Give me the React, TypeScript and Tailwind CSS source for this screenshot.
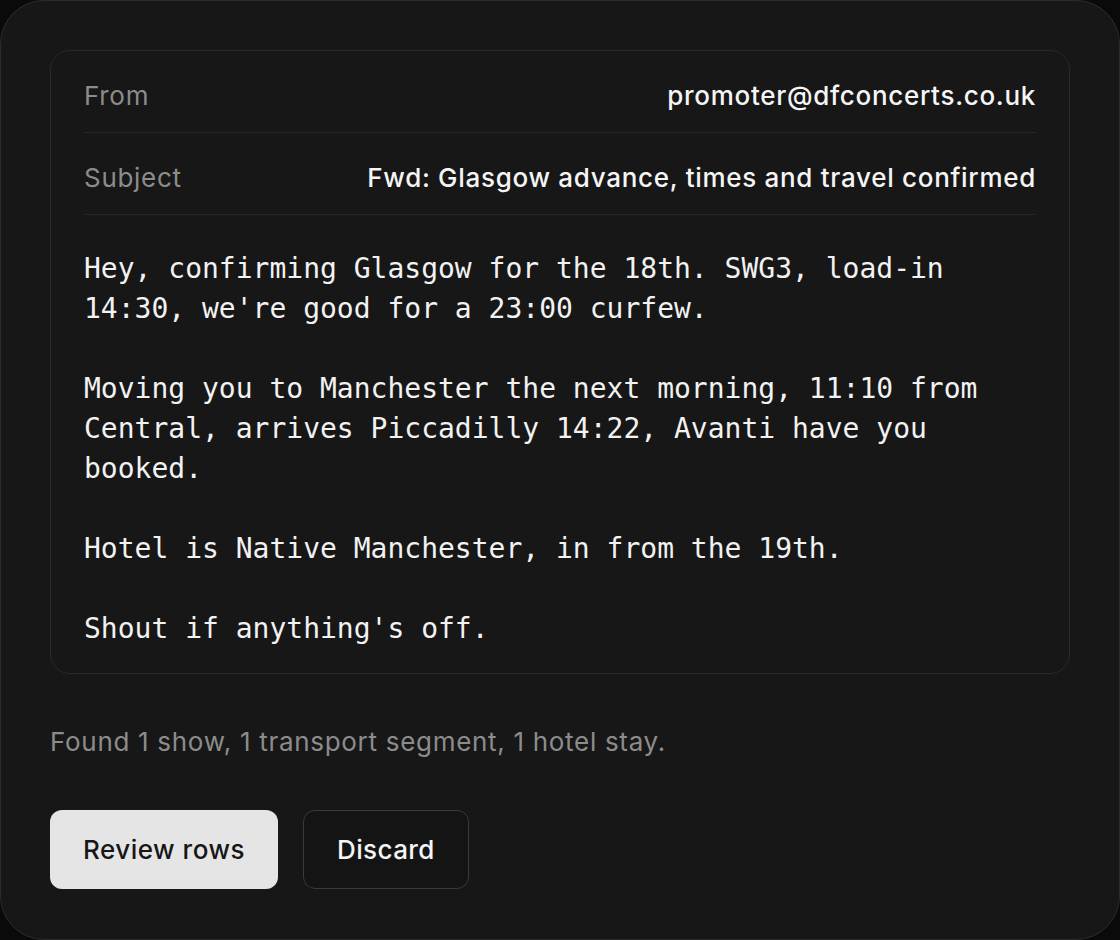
const BODY = `Hey, confirming Glasgow for the 18th. SWG3, load-in 14:30, we're good for a 23:00 curfew.

Moving you to Manchester the next morning, 11:10 from Central, arrives Piccadilly 14:22, Avanti have you booked.

Hotel is Native Manchester, in from the 19th.

Shout if anything's off.`;

const FIELDS = [
  { label: "From", value: "promoter@dfconcerts.co.uk" },
  { label: "Subject", value: "Fwd: Glasgow advance, times and travel confirmed" },
];

export default function App() {
  return (
    <div className="min-h-screen bg-[#0a0a0a] font-['Inter','Liberation_Sans',sans-serif]">
      <div className="w-[1120px] h-[940px] rounded-[44px] border border-[#2c2c2c] bg-[#171717] p-[49px] flex flex-col">
        {/* email preview */}
        <div className="rounded-[20px] border border-[#2a2a2a] bg-[#171717] px-[33px]">
          {FIELDS.map((f) => (
            <div
              key={f.label}
              className="flex items-center justify-between border-b border-[#272727] pt-[29px] pb-[20px] text-[26px] leading-[32px] tracking-[0.7px]"
            >
              <span className="text-[#8c8c8c]">{f.label}</span>
              <span className="font-medium text-[#f5f5f5]">{f.value}</span>
            </div>
          ))}
          <p className="whitespace-pre-wrap pt-[34px] pb-[24px] font-['DejaVu_Sans_Mono','Liberation_Mono',monospace] text-[28px] leading-[40px] text-[#f2f2f2]">
            {BODY}
          </p>
        </div>

        <p className="mt-[52px] text-[26px] leading-[32px] tracking-[0.7px] text-[#8c8c8c]">
          Found 1 show, 1 transport segment, 1 hotel stay.
        </p>

        <div className="mt-[52px] flex gap-[25px]">
          <button className="h-[79px] rounded-[12px] bg-[#e5e5e5] px-[33px] text-[26px] font-medium tracking-[0.5px] text-[#171717]">
            Review rows
          </button>
          <button className="h-[79px] rounded-[12px] border border-[#3a3a3a] bg-[#141414] px-[33px] text-[26px] font-medium tracking-[0.4px] text-[#f5f5f5]">
            Discard
          </button>
        </div>
      </div>
    </div>
  );
}
